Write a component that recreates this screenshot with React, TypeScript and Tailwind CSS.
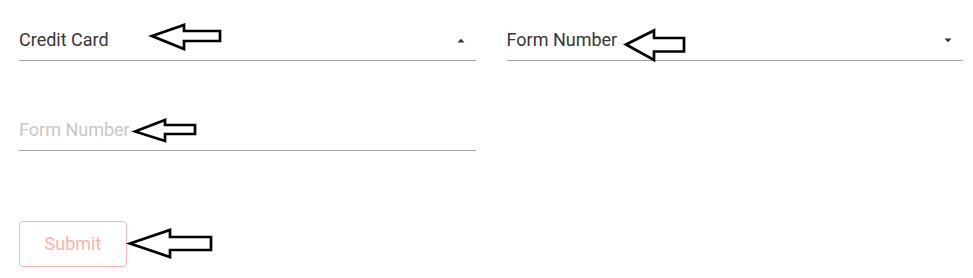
import React from "react";

function Caret({ up }: { up?: boolean }) {
  return (
    <svg width="8" height="5" viewBox="0 0 8 5" className="absolute right-[11px] top-[8px]">
      {up ? <path d="M0.5 4.5 L4 0.8 L7.5 4.5 Z" fill="#333" /> : <path d="M0.5 0.5 L4 4.2 L7.5 0.5 Z" fill="#333" />}
    </svg>
  );
}

function Field({ text, placeholder, caret }: { text: string; placeholder?: boolean; caret?: "up" | "down" }) {
  return (
    <div className="relative border-b border-[#a2a2a2] pb-[11px]">
      <div className={`h-[19px] leading-[19px] text-[18px] ${placeholder ? "text-[#c8c8c8]" : "text-[#363636]"}`}>{text}</div>
      {caret && <Caret up={caret === "up"} />}
    </div>
  );
}

export default function App() {
  const shapes = [
    { tx: 152, ty: 36, hx: 184, ht: 25, hb: 49, st: 31, sb: 41, rx: 220 },
    { tx: 626, ty: 44.5, hx: 654, ht: 30.5, hb: 60, st: 38, sb: 51.5, rx: 684 },
    { tx: 135, ty: 131.5, hx: 165, ht: 120, hb: 141, st: 125, sb: 134, rx: 195 },
    { tx: 130, ty: 243.5, hx: 170, ht: 230, hb: 257, st: 237, sb: 250, rx: 211 },
  ];
  return (
    <div className="relative w-[973px] h-[278px] bg-white font-['Roboto',sans-serif] overflow-hidden">
      <div className="pl-[19px] pr-[10px] pt-[30px]">
        <div className="grid grid-cols-2 gap-x-[31px]">
          <Field text="Credit Card" caret="up" />
          <Field text="Form Number" caret="down" />
        </div>
        <div className="grid grid-cols-2 gap-x-[31px] mt-[59px]">
          <Field text="Form Number" placeholder />
          <div />
        </div>
        <div className="mt-[70px]">
          <button className="w-[108px] h-[46px] rounded-[4px] border border-[#ffb3b3] text-[#ffb0b0] text-[18px] leading-none flex items-center justify-center">
            Submit
          </button>
        </div>
      </div>
      <svg className="absolute inset-0 pointer-events-none" width="973" height="278" viewBox="0 0 973 278">
        {shapes.map((s, i) => (
          <polygon
            key={i}
            points={`${s.tx},${s.ty} ${s.hx},${s.ht} ${s.hx},${s.st} ${s.rx},${s.st} ${s.rx},${s.sb} ${s.hx},${s.sb} ${s.hx},${s.hb}`}
            fill="white"
            stroke="black"
            strokeWidth="2.7"
            strokeLinejoin="miter"
          />
        ))}
      </svg>
    </div>
  );
}
